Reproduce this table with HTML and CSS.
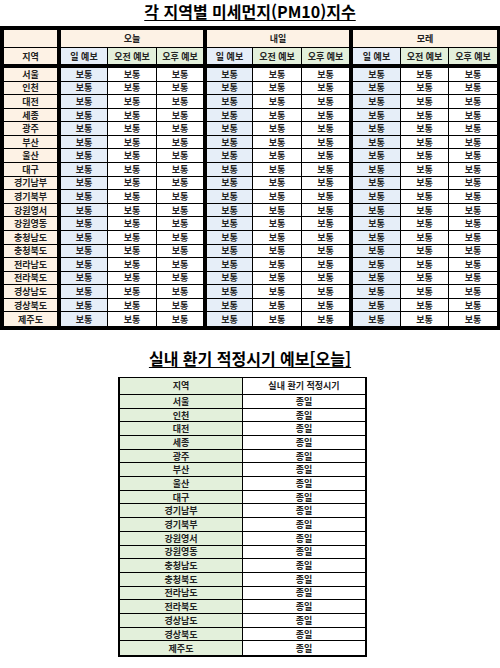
FILE: index.html
```html
<!DOCTYPE html>
<html lang="ko">
<head>
<meta charset="utf-8">
<title>미세먼지 지수</title>
<link rel="stylesheet" href="styles.css">
</head>
<body>
<h1 class="title">각 지역별 미세먼지(PM10)지수</h1>
<div class="t1">
  <div class="row h1r"><div class="c"></div><div class="c grp">오늘</div><div class="c grp">내일</div><div class="c grp">모레</div></div>
  <div class="row h2r"><div class="c">지역</div><div class="c">일 예보</div><div class="c">오전 예보</div><div class="c">오후 예보</div><div class="c">일 예보</div><div class="c">오전 예보</div><div class="c">오후 예보</div><div class="c">일 예보</div><div class="c">오전 예보</div><div class="c">오후 예보</div></div>
  <div class="row dr"><div class="c">서울</div><div class="c">보통</div><div class="c">보통</div><div class="c">보통</div><div class="c">보통</div><div class="c">보통</div><div class="c">보통</div><div class="c">보통</div><div class="c">보통</div><div class="c">보통</div></div>
  <div class="row dr"><div class="c">인천</div><div class="c">보통</div><div class="c">보통</div><div class="c">보통</div><div class="c">보통</div><div class="c">보통</div><div class="c">보통</div><div class="c">보통</div><div class="c">보통</div><div class="c">보통</div></div>
  <div class="row dr"><div class="c">대전</div><div class="c">보통</div><div class="c">보통</div><div class="c">보통</div><div class="c">보통</div><div class="c">보통</div><div class="c">보통</div><div class="c">보통</div><div class="c">보통</div><div class="c">보통</div></div>
  <div class="row dr"><div class="c">세종</div><div class="c">보통</div><div class="c">보통</div><div class="c">보통</div><div class="c">보통</div><div class="c">보통</div><div class="c">보통</div><div class="c">보통</div><div class="c">보통</div><div class="c">보통</div></div>
  <div class="row dr"><div class="c">광주</div><div class="c">보통</div><div class="c">보통</div><div class="c">보통</div><div class="c">보통</div><div class="c">보통</div><div class="c">보통</div><div class="c">보통</div><div class="c">보통</div><div class="c">보통</div></div>
  <div class="row dr"><div class="c">부산</div><div class="c">보통</div><div class="c">보통</div><div class="c">보통</div><div class="c">보통</div><div class="c">보통</div><div class="c">보통</div><div class="c">보통</div><div class="c">보통</div><div class="c">보통</div></div>
  <div class="row dr"><div class="c">울산</div><div class="c">보통</div><div class="c">보통</div><div class="c">보통</div><div class="c">보통</div><div class="c">보통</div><div class="c">보통</div><div class="c">보통</div><div class="c">보통</div><div class="c">보통</div></div>
  <div class="row dr"><div class="c">대구</div><div class="c">보통</div><div class="c">보통</div><div class="c">보통</div><div class="c">보통</div><div class="c">보통</div><div class="c">보통</div><div class="c">보통</div><div class="c">보통</div><div class="c">보통</div></div>
  <div class="row dr"><div class="c">경기남부</div><div class="c">보통</div><div class="c">보통</div><div class="c">보통</div><div class="c">보통</div><div class="c">보통</div><div class="c">보통</div><div class="c">보통</div><div class="c">보통</div><div class="c">보통</div></div>
  <div class="row dr"><div class="c">경기북부</div><div class="c">보통</div><div class="c">보통</div><div class="c">보통</div><div class="c">보통</div><div class="c">보통</div><div class="c">보통</div><div class="c">보통</div><div class="c">보통</div><div class="c">보통</div></div>
  <div class="row dr"><div class="c">강원영서</div><div class="c">보통</div><div class="c">보통</div><div class="c">보통</div><div class="c">보통</div><div class="c">보통</div><div class="c">보통</div><div class="c">보통</div><div class="c">보통</div><div class="c">보통</div></div>
  <div class="row dr"><div class="c">강원영동</div><div class="c">보통</div><div class="c">보통</div><div class="c">보통</div><div class="c">보통</div><div class="c">보통</div><div class="c">보통</div><div class="c">보통</div><div class="c">보통</div><div class="c">보통</div></div>
  <div class="row dr"><div class="c">충청남도</div><div class="c">보통</div><div class="c">보통</div><div class="c">보통</div><div class="c">보통</div><div class="c">보통</div><div class="c">보통</div><div class="c">보통</div><div class="c">보통</div><div class="c">보통</div></div>
  <div class="row dr"><div class="c">충청북도</div><div class="c">보통</div><div class="c">보통</div><div class="c">보통</div><div class="c">보통</div><div class="c">보통</div><div class="c">보통</div><div class="c">보통</div><div class="c">보통</div><div class="c">보통</div></div>
  <div class="row dr"><div class="c">전라남도</div><div class="c">보통</div><div class="c">보통</div><div class="c">보통</div><div class="c">보통</div><div class="c">보통</div><div class="c">보통</div><div class="c">보통</div><div class="c">보통</div><div class="c">보통</div></div>
  <div class="row dr"><div class="c">전라북도</div><div class="c">보통</div><div class="c">보통</div><div class="c">보통</div><div class="c">보통</div><div class="c">보통</div><div class="c">보통</div><div class="c">보통</div><div class="c">보통</div><div class="c">보통</div></div>
  <div class="row dr"><div class="c">경상남도</div><div class="c">보통</div><div class="c">보통</div><div class="c">보통</div><div class="c">보통</div><div class="c">보통</div><div class="c">보통</div><div class="c">보통</div><div class="c">보통</div><div class="c">보통</div></div>
  <div class="row dr"><div class="c">경상북도</div><div class="c">보통</div><div class="c">보통</div><div class="c">보통</div><div class="c">보통</div><div class="c">보통</div><div class="c">보통</div><div class="c">보통</div><div class="c">보통</div><div class="c">보통</div></div>
  <div class="row dr"><div class="c">제주도</div><div class="c">보통</div><div class="c">보통</div><div class="c">보통</div><div class="c">보통</div><div class="c">보통</div><div class="c">보통</div><div class="c">보통</div><div class="c">보통</div><div class="c">보통</div></div>
</div>

<h2 class="title title2">실내 환기 적정시기 예보[오늘]</h2>
<div class="t2">
  <div class="row hr"><div class="c">지역</div><div class="c">실내 환기 적정시기</div></div>
  <div class="row"><div class="c">서울</div><div class="c">종일</div></div>
  <div class="row"><div class="c">인천</div><div class="c">종일</div></div>
  <div class="row"><div class="c">대전</div><div class="c">종일</div></div>
  <div class="row"><div class="c">세종</div><div class="c">종일</div></div>
  <div class="row"><div class="c">광주</div><div class="c">종일</div></div>
  <div class="row"><div class="c">부산</div><div class="c">종일</div></div>
  <div class="row"><div class="c">울산</div><div class="c">종일</div></div>
  <div class="row"><div class="c">대구</div><div class="c">종일</div></div>
  <div class="row"><div class="c">경기남부</div><div class="c">종일</div></div>
  <div class="row"><div class="c">경기북부</div><div class="c">종일</div></div>
  <div class="row"><div class="c">강원영서</div><div class="c">종일</div></div>
  <div class="row"><div class="c">강원영동</div><div class="c">종일</div></div>
  <div class="row"><div class="c">충청남도</div><div class="c">종일</div></div>
  <div class="row"><div class="c">충청북도</div><div class="c">종일</div></div>
  <div class="row"><div class="c">전라남도</div><div class="c">종일</div></div>
  <div class="row"><div class="c">전라북도</div><div class="c">종일</div></div>
  <div class="row"><div class="c">경상남도</div><div class="c">종일</div></div>
  <div class="row"><div class="c">경상북도</div><div class="c">종일</div></div>
  <div class="row"><div class="c">제주도</div><div class="c">종일</div></div>
</div>
</body>
</html>
```

FILE: styles.css
```css
html, body {
  margin: 0;
  padding: 0;
  background: #ffffff;
}
body {
  width: 500px;
  font-family: "Noto Sans CJK KR", "Noto Sans", sans-serif;
  color: #222222;
}
.title {
  margin: 0;
  height: 26px;
  box-sizing: border-box;
  padding: 0;
  font-size: 16px;
  line-height: 22px;
  font-weight: 700;
  text-align: center;
  text-decoration: underline;
  text-decoration-thickness: 1px;
  text-underline-offset: 2px;
  color: #000;
}
.title2 {
  margin-top: 17px;
  height: 30px;
}

/* ---------- table 1 ---------- */
.t1 {
  display: grid;
  grid-template-columns: 57px 47px 49px 50px 46px 49px 51px 48px 48px 48px;
  grid-template-rows: 18px 20px repeat(19, 13.58px);
  width: 500px;
  box-sizing: border-box;
  border: 4px solid #000;
  border-right-width: 3px;
}
.row { display: contents; }
.c {
  box-sizing: border-box;
  display: flex;
  align-items: center;
  justify-content: center;
  font-size: 9px;
  line-height: 1;
  font-weight: 700;
  white-space: nowrap;
  overflow: hidden;
  border-right: 1px solid #000;
  border-bottom: 1px solid #000;
}
.t1 .row > .c:first-child {
  background: #fdf2e5;
  border-right-width: 4px;
}
.t1 .grp {
  grid-column: span 3;
  background: #fdf2e5;
  border-right-width: 4px;
}
.t1 .grp:last-child { border-right: 0; }
.h2r > .c { border-bottom-width: 4px; }
.h2r > .c:nth-child(3n+2) { background: #e6eef8; }
.h2r > .c:nth-child(3n+3),
.h2r > .c:nth-child(3n+4) { background: #e3f0db; }
.dr > .c:nth-child(3n+2) { background: #e6eef8; }
.h2r > .c:nth-child(4), .h2r > .c:nth-child(7),
.dr > .c:nth-child(4), .dr > .c:nth-child(7) { border-right-width: 4px; }
.h2r > .c:nth-child(10), .dr > .c:nth-child(10) { border-right: 0; }
.dr:last-child > .c { border-bottom: 0; }

/* ---------- table 2 ---------- */
.t2 {
  display: grid;
  grid-template-columns: 123px 122px;
  grid-template-rows: 17px repeat(19, 13.7px);
  width: 249px;
  margin-left: 118px;
  box-sizing: border-box;
  border-left: 2px solid #000;
  border-right: 2px solid #000;
  border-top: 1px solid #000;
  border-bottom: 2px solid #000;
}
.t2 .row > .c:first-child { background: #e3f0db; }
.t2 .row > .c:last-child { border-right: 0; }
.t2 .row:last-child > .c { border-bottom: 0; }
```
